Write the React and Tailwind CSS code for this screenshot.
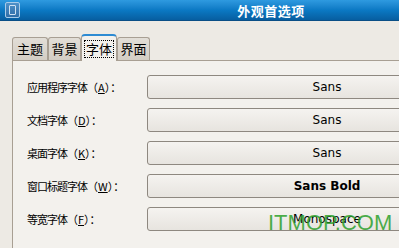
import React from "react";

const rows = [
  { label: "应用程序字体", key: "A", value: "Sans" },
  { label: "文档字体", key: "D", value: "Sans" },
  { label: "桌面字体", key: "K", value: "Sans" },
  { label: "窗口标题字体", key: "W", value: "Sans Bold", bold: true },
  { label: "等宽字体", key: "F", value: "Monospace" },
];

const tabs = ["主题", "背景", "字体", "界面"];

const cjk = { fontFamily: '"Noto Sans CJK SC", "DejaVu Sans", sans-serif' };

export default function App() {
  return (
    <div className="relative w-[399px] h-[248px] overflow-hidden bg-[#edeae4] flex flex-col" style={cjk}>
      {/* title bar */}
      <div className="h-[21px] shrink-0 flex items-center bg-gradient-to-b from-[#2e9ae0] via-[#0b79c4] to-[#075ea0] border-b border-[#0a4f86] px-[5px]">
        <div className="w-[15px] h-[16px] rounded-[2px] border border-[#a8cbe8] bg-gradient-to-b from-[#4f91c9] to-[#2f6ea8] flex justify-center pt-[2px]">
          <div className="w-[7px] h-[10px] border border-[#cfe2f2] rounded-[1px]" />
        </div>
        <div className="flex-1 text-center pl-[128px] text-white font-bold text-[13px] tracking-[0.5px] leading-none">
          外观首选项
        </div>
      </div>

      {/* tabs */}
      <div className="mt-[12px] pl-[12px] flex items-end h-[27px] relative z-10">
        {tabs.map((t, i) =>
          i === 2 ? (
            <div
              key={t}
              className="w-[36px] h-[27px] -mb-px bg-[#f3f1ed] border-x border-t-2 border-[#a89f93] border-t-[#2d8bd3] rounded-t-[4px] flex items-center justify-center text-[13px] text-black"
            >
              <span className="border border-dotted border-black px-[1px] leading-[16px]">{t}</span>
            </div>
          ) : (
            <div
              key={t}
              className={`h-[23px] bg-gradient-to-b from-[#e2ded7] to-[#d3cdc4] border border-b-0 border-[#a89f93] rounded-t-[3px] flex items-center justify-center text-[13px] text-black ${
                i === 0 ? "w-[36px]" : "w-[33px]"
              }`}
            >
              {t}
            </div>
          )
        )}
      </div>

      {/* panel */}
      <div className="flex-1 ml-[12px] bg-[#f3f1ed] border-l border-t border-[#a89f93] pt-[14px] pl-[14px] flex flex-col gap-[9px]">
        {rows.map((r) => (
          <div key={r.key} className="flex items-center h-[24px]">
            <div className="w-[120px] shrink-0 text-[11px] text-black leading-none whitespace-nowrap">
              <span className="tracking-[-1px]">{r.label}</span>（<span className="underline">{r.key}</span>）：
            </div>
            <div
              className={`w-[360px] shrink-0 h-[24px] rounded-[3px] border border-[#8e8880] bg-gradient-to-b from-[#f5f3f0] to-[#e7e4df] flex items-center justify-center text-[12px] text-black ${
                r.bold ? "font-bold" : ""
              }`}
              style={{ fontFamily: '"DejaVu Sans", sans-serif' }}
            >
              {r.value}
            </div>
          </div>
        ))}
      </div>

      {/* watermark */}
      <div
        className="absolute left-[268px] top-[212px] text-[22px] leading-none text-[#2ca02c]/85"
        style={{ fontFamily: '"Liberation Sans", Arial, sans-serif' }}
      >
        ITMOP.COM
      </div>
    </div>
  );
}
